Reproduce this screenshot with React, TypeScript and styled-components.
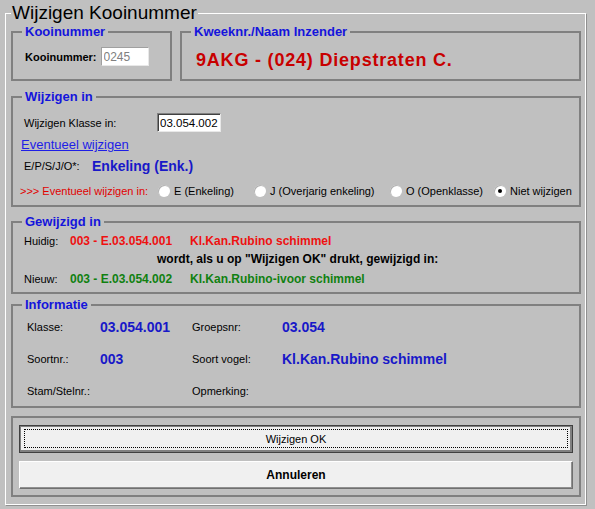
import React from 'react'
import styled, { createGlobalStyle } from 'styled-components'

const GlobalStyle = createGlobalStyle`
  html, body {
    margin: 0;
    padding: 0;
    background: #c0c0c0;
  }
  body {
    font-family: "Liberation Sans", Arial, sans-serif;
    font-size: 11px;
    color: #000;
  }
`

const Window = styled.div`
  width: 595px;
  height: 509px;
  box-sizing: border-box;
  padding: 13px 0 0 5px;
  overflow: hidden;
`

// etched frame round the whole dialog, its caption sits on the top line
const MainFrame = styled.section`
  width: 581px;
  height: 492px;
  box-sizing: border-box;
  padding: 0 4px 0 5px;
  border: 1px solid #ffffff;
  box-shadow: 1px 1px 0 #909090;
`

const MainTitle = styled.h1`
  width: max-content;
  margin: -12px 0 0;
  padding: 0 1px;
  background: #c0c0c0;
  font-weight: normal;
  font-size: 19px;
  line-height: 22px;
  color: #000;
`

const Stack = styled.div`
  display: flex;
  flex-direction: column;
`

const TopRow = styled.div`
  display: flex;
  gap: 8px;
  margin-top: 7px;
`

const Group = styled.div<{ $h: number; $w?: number; $mt?: number; $grow?: boolean }>`
  margin-top: ${({ $mt }) => $mt ?? 0}px;
  box-sizing: border-box;
  border: 2px solid #808080;
  height: ${({ $h }) => $h}px;
  flex: ${({ $grow }) => ($grow ? '1 1 0' : 'none')};
  ${({ $w }) => ($w ? `width: ${$w}px;` : '')}
`

const GroupTitle = styled.h2`
  width: max-content;
  margin: -9px 0 0 9px;
  padding: 0 3px;
  background: #c0c0c0;
  font-weight: bold;
  font-size: 13px;
  line-height: 16px;
  color: #1414dc;
`

const FieldRow = styled.div<{ $pt?: number; $pl?: number }>`
  display: flex;
  align-items: center;
  padding: ${({ $pt }) => $pt ?? 0}px 0 0 ${({ $pl }) => $pl ?? 0}px;
`

const BoldLabel = styled.span`
  font-weight: bold;
  font-size: 11px;
  margin-right: 4px;
`

const Label = styled.span<{ $w?: number }>`
  font-size: 11px;
  line-height: 16px;
  white-space: nowrap;
  ${({ $w }) => ($w ? `width: ${$w}px; flex: none;` : '')}
`

const TextBox = styled.input<{ $w: number; $dim?: boolean; $fs: number }>`
  width: ${({ $w }) => $w}px;
  height: 19px;
  box-sizing: border-box;
  margin: 0;
  padding: 0 2px;
  font-family: "Liberation Sans", Arial, sans-serif;
  font-size: ${({ $fs }) => $fs}px;
  background: #fff;
  outline: none;
  color: ${({ $dim }) => ($dim ? '#808080' : '#000')};
  border: 1px solid;
  border-color: ${({ $dim }) =>
    $dim ? '#a0a0a0 #e8e8e8 #e8e8e8 #a0a0a0' : '#808080 #e8e8e8 #e8e8e8 #808080'};
  box-shadow: ${({ $dim }) => ($dim ? 'none' : 'inset 1px 1px 0 #404040')};
`

const Breeder = styled.div`
  padding: 9px 0 0 14px;
  font-size: 18px;
  line-height: 22px;
  letter-spacing: 0.8px;
  font-weight: bold;
  color: #c80000;
  white-space: nowrap;
`

const GroupBody = styled.div<{ $pt: number; $pl: number }>`
  padding: ${({ $pt }) => $pt}px 0 0 ${({ $pl }) => $pl}px;
`

const LinkText = styled.a`
  display: block;
  width: max-content;
  margin: 5px 0 0 -3px;
  font-size: 13px;
  line-height: 16px;
  color: #1e1ee6;
  text-decoration: underline;
  cursor: pointer;
`

const TypeRow = styled.div`
  display: flex;
  align-items: center;
  margin-top: 4px;
  height: 18px;
`

const BlueValue = styled.span`
  font-weight: bold;
  font-size: 14px;
  line-height: 18px;
  color: #1818c8;
  white-space: nowrap;
`

const RadioRow = styled.div`
  display: flex;
  align-items: center;
  height: 16px;
  margin: 8px 0 0 -4px;
`

const RedLabel = styled.span`
  width: 138px;
  flex: none;
  font-size: 11px;
  color: #e00000;
  white-space: nowrap;
`

const RadioOption = styled.label<{ $w?: number }>`
  display: flex;
  align-items: center;
  gap: 4px;
  font-size: 11px;
  white-space: nowrap;
  ${({ $w }) => ($w ? `width: ${$w}px; flex: none;` : '')}
`

const RadioDot = styled.span<{ $checked?: boolean }>`
  width: 12px;
  height: 12px;
  border-radius: 50%;
  background: #fff;
  box-shadow: inset 1px 1px 0 #b0b0b0;
  display: flex;
  align-items: center;
  justify-content: center;
  &::after {
    content: '';
    width: 4px;
    height: 4px;
    border-radius: 50%;
    background: #000;
    display: ${({ $checked }) => ($checked ? 'block' : 'none')};
  }
`

const ChangeRow = styled.div`
  display: grid;
  grid-template-columns: 46px 120px auto;
  align-items: center;
  height: 19px;
  white-space: nowrap;
`

const ChangeValue = styled.span<{ $color: string }>`
  font-weight: bold;
  font-size: 12px;
  color: ${({ $color }) => $color};
`

const Notice = styled.div`
  height: 19px;
  line-height: 19px;
  padding-left: 133px;
  font-weight: bold;
  font-size: 12px;
  white-space: nowrap;
`

const InfoGrid = styled.div`
  display: grid;
  grid-template-columns: 73px 92px 90px 1fr;
  grid-auto-rows: 20px;
  row-gap: 12px;
  align-items: center;
  padding: 4px 0 0 14px;
  white-space: nowrap;
`

const ButtonStack = styled.div`
  display: flex;
  flex-direction: column;
  gap: 8px;
  padding: 7px 6px 0;
`

const DialogButton = styled.button<{ $default?: boolean }>`
  position: relative;
  height: 28px;
  margin: 0;
  padding: 0;
  box-sizing: border-box;
  background: #f0f0f0;
  font-family: "Liberation Sans", Arial, sans-serif;
  font-size: ${({ $default }) => ($default ? 11 : 12)}px;
  font-weight: ${({ $default }) => ($default ? 'normal' : 'bold')};
  color: #000;
  border: 1px solid;
  border-color: ${({ $default }) =>
    $default ? '#404040' : '#ffffff #707070 #707070 #ffffff'};
  box-shadow: ${({ $default }) =>
    $default
      ? 'inset 1px 1px 0 #808080, inset -2px -2px 0 #808080'
      : 'inset -1px -1px 0 #909090'};
  ${({ $default }) =>
    $default
      ? `&::after {
    content: '';
    position: absolute;
    inset: 3px 4px 4px 4px;
    border: 1px dotted #000;
  }`
      : ''}
`

const options = [
  { label: 'E (Enkeling)', w: 96 },
  { label: 'J (Overjarig enkeling)', w: 136 },
  { label: 'O (Openklasse)', w: 104 },
  { label: 'Niet wijzigen', checked: true },
]

const App = () => (
  <Window>
    <GlobalStyle />
    <MainFrame>
      <MainTitle>Wijzigen Kooinummer</MainTitle>
      <Stack>
        <TopRow>
          <Group $h={50} $w={161}>
            <GroupTitle>Kooinummer</GroupTitle>
            <FieldRow $pt={7} $pl={12}>
              <BoldLabel>Kooinummer:</BoldLabel>
              <TextBox $w={48} $fs={12} $dim readOnly defaultValue="0245" />
            </FieldRow>
          </Group>
          <Group $h={50} $grow>
            <GroupTitle>Kweeknr./Naam Inzender</GroupTitle>
            <Breeder>9AKG - (024) Diepstraten C.</Breeder>
          </Group>
        </TopRow>

        <Group $h={111} $mt={15}>
          <GroupTitle>Wijzigen in</GroupTitle>
          <GroupBody $pt={8} $pl={11}>
            <FieldRow>
              <Label $w={133}>Wijzigen Klasse in:</Label>
              <TextBox $w={64} $fs={11.5} readOnly defaultValue="03.054.002" />
            </FieldRow>
            <LinkText>Eventueel wijzigen</LinkText>
            <TypeRow>
              <Label $w={68}>E/P/S/J/O*:</Label>
              <BlueValue>Enkeling (Enk.)</BlueValue>
            </TypeRow>
            <RadioRow>
              <RedLabel>&gt;&gt;&gt; Eventueel wijzigen in:</RedLabel>
              {options.map((o) => (
                <RadioOption key={o.label} $w={o.w}>
                  <RadioDot $checked={o.checked} />
                  {o.label}
                </RadioOption>
              ))}
            </RadioRow>
          </GroupBody>
        </Group>

        <Group $h={73} $mt={14}>
          <GroupTitle>Gewijzigd in</GroupTitle>
          <GroupBody $pt={1} $pl={11}>
            <ChangeRow>
              <Label>Huidig:</Label>
              <ChangeValue $color="#ee1111">003 - E.03.054.001</ChangeValue>
              <ChangeValue $color="#ee1111">Kl.Kan.Rubino schimmel</ChangeValue>
            </ChangeRow>
            <Notice>wordt, als u op "Wijzigen OK" drukt, gewijzigd in:</Notice>
            <ChangeRow>
              <Label>Nieuw:</Label>
              <ChangeValue $color="#108010">003 - E.03.054.002</ChangeValue>
              <ChangeValue $color="#108010">Kl.Kan.Rubino-ivoor schimmel</ChangeValue>
            </ChangeRow>
          </GroupBody>
        </Group>

        <Group $h={104} $mt={10}>
          <GroupTitle>Informatie</GroupTitle>
          <InfoGrid>
            <Label>Klasse:</Label>
            <BlueValue>03.054.001</BlueValue>
            <Label>Groepsnr:</Label>
            <BlueValue>03.054</BlueValue>
            <Label>Soortnr.:</Label>
            <BlueValue>003</BlueValue>
            <Label>Soort vogel:</Label>
            <BlueValue>Kl.Kan.Rubino schimmel</BlueValue>
            <Label>Stam/Stelnr.:</Label>
            <span />
            <Label>Opmerking:</Label>
            <span />
          </InfoGrid>
        </Group>

        <Group $h={81} $mt={8}>
          <ButtonStack>
            <DialogButton $default>Wijzigen OK</DialogButton>
            <DialogButton>Annuleren</DialogButton>
          </ButtonStack>
        </Group>
      </Stack>
    </MainFrame>
  </Window>
)

export default App
